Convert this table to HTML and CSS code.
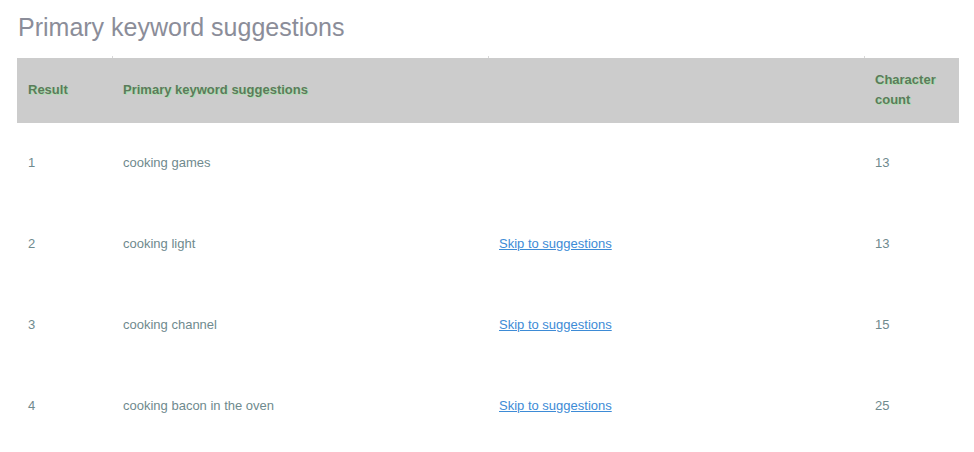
FILE: index.html
```html
<!DOCTYPE html>
<html>
<head>
<meta charset="utf-8">
<link rel="stylesheet" href="styles.css">
</head>
<body>
<div class="page">
  <h1 class="title">Primary keyword suggestions</h1>
  <table class="kw-table">
    <thead>
      <tr>
        <th class="c-result">Result</th>
        <th class="c-kw">Primary keyword suggestions</th>
        <th class="c-skip"></th>
        <th class="c-count">Character<br>count</th>
      </tr>
    </thead>
    <tbody>
      <tr><td>1</td><td>cooking games</td><td></td><td>13</td></tr>
      <tr><td>2</td><td>cooking light</td><td><a href="#">Skip to suggestions</a></td><td>13</td></tr>
      <tr><td>3</td><td>cooking channel</td><td><a href="#">Skip to suggestions</a></td><td>15</td></tr>
      <tr><td>4</td><td>cooking bacon in the oven</td><td><a href="#">Skip to suggestions</a></td><td>25</td></tr>
    </tbody>
  </table>
</div>
</body>
</html>
```

FILE: styles.css
```css
html, body {
  margin: 0;
  padding: 0;
  background: #ffffff;
}

.page {
  padding: 12px 15px 0 17px;
  font-family: "Liberation Sans", Arial, sans-serif;
}

.title {
  margin: 0 0 16px 1px;
  font-size: 25px;
  line-height: 30px;
  font-weight: normal;
  color: #8b8d99;
}

.kw-table {
  width: 942px;
  border-collapse: collapse;
  table-layout: fixed;
  font-size: 13px;
  line-height: 20px;
}

.kw-table th {
  background: #cccccc;
  height: 65px;
  box-sizing: border-box;
  padding: 0 11px 2px;
  text-align: left;
  vertical-align: middle;
  font-weight: bold;
  color: #5b7b5b;
  text-shadow: 1px 1px 0 #ace0ac;
  position: relative;
}

.kw-table th + th::before {
  content: "";
  position: absolute;
  left: 0;
  top: -2px;
  width: 1px;
  height: 2px;
  background: #d8d8d8;
}

.c-result { width: 95px; }
.c-kw { width: 376px; }
.c-skip { width: 376px; }
.c-count { width: 95px; }

.kw-table td {
  height: 81px;
  box-sizing: border-box;
  padding: 0 11px 2px;
  vertical-align: middle;
  color: #6f8a8e;
}

.kw-table a {
  color: #3d8bd6;
  text-decoration: underline;
}
```
